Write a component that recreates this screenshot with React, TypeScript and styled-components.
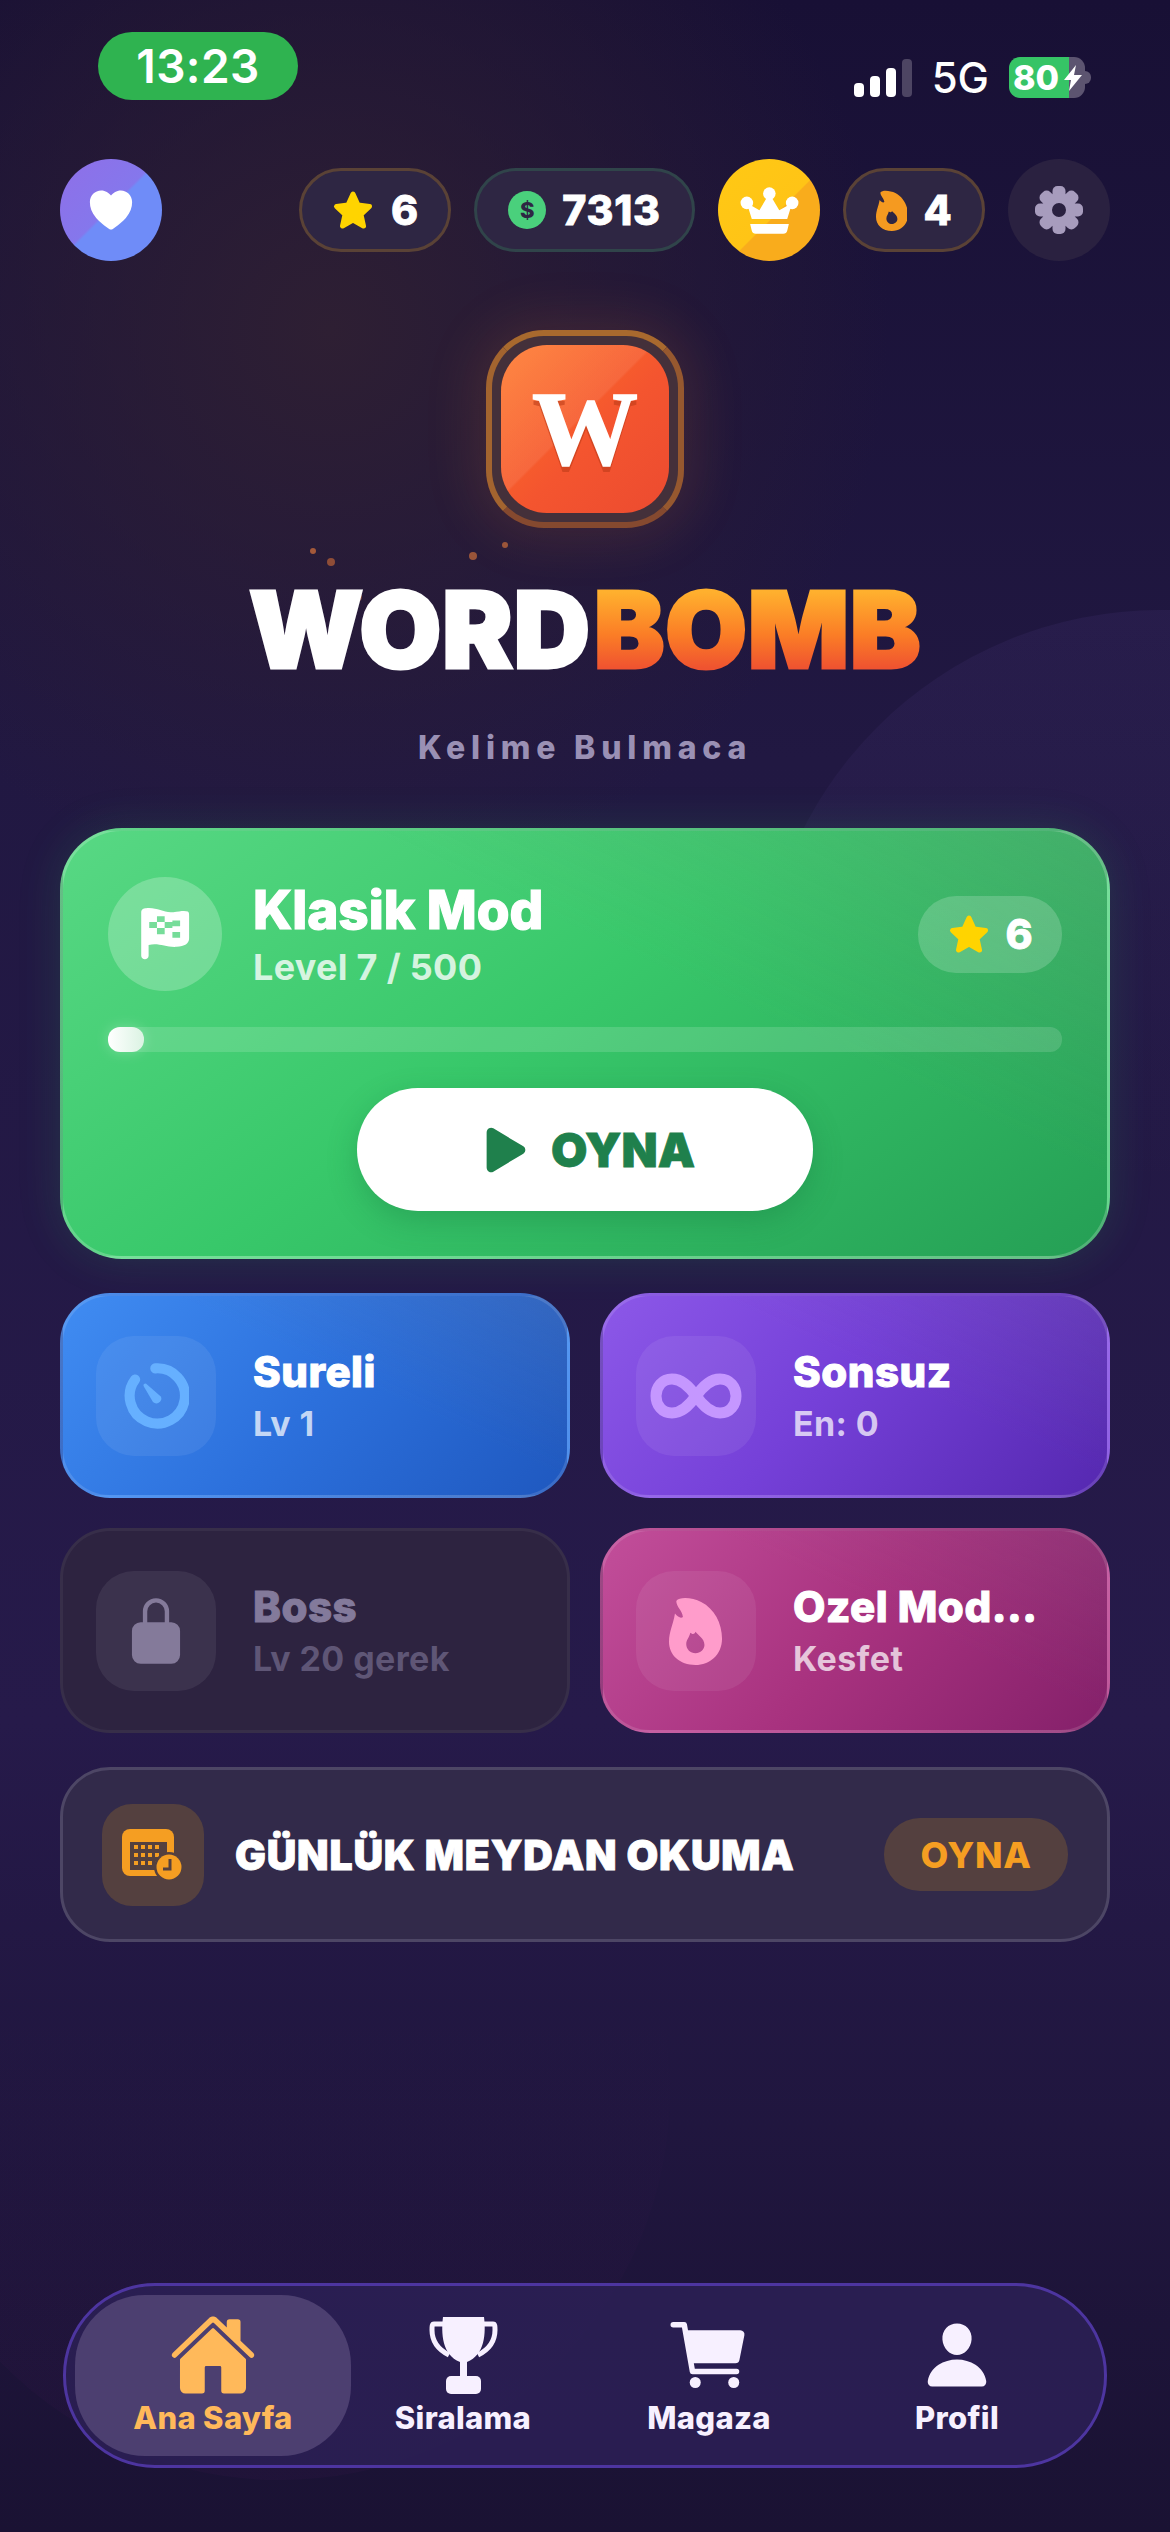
import * as React from 'react';
import styled, { createGlobalStyle } from 'styled-components';
import { IoHeart, IoHome, IoLockClosed, IoPerson, IoPlay, IoCart } from 'react-icons/io5';

const Global = createGlobalStyle`
  html, body { margin: 0; padding: 0; background: #1a1234; }
  * { box-sizing: border-box; }
  body { font-family: Inter, "Noto Sans", sans-serif; color: #fff; }
`;

const Page = styled.div`
  position: relative;
  width: 1170px;
  height: 2532px;
  overflow: hidden;
  display: flex;
  flex-direction: column;
  background:
    radial-gradient(circle 560px at 330px 330px, #2e1f33 0%, rgba(46, 31, 51, 0) 100%),
    linear-gradient(180deg, #181035 0%, #211842 30%, #261a4a 68%, #1a1233 100%);
`;

const Blob = styled.div<{ $x: number; $y: number; $r: number; $c: string }>`
  position: absolute;
  left: ${(p) => p.$x - p.$r}px;
  top: ${(p) => p.$y - p.$r}px;
  width: ${(p) => p.$r * 2}px;
  height: ${(p) => p.$r * 2}px;
  border-radius: 50%;
  background: ${(p) => p.$c};
`;

const Spark = styled.div<{ $x: number; $y: number; $r: number; $c: string }>`
  position: absolute;
  left: ${(p) => p.$x - p.$r}px;
  top: ${(p) => p.$y - p.$r}px;
  width: ${(p) => p.$r * 2}px;
  height: ${(p) => p.$r * 2}px;
  border-radius: 50%;
  background: ${(p) => p.$c};
`;

const StatusBar = styled.div`
  position: relative;
  height: 159px;
  padding: 32px 85px 0 98px;
  display: flex;
  justify-content: space-between;
  align-items: flex-start;
`;

const TimePill = styled.div`
  width: 200px;
  height: 68px;
  border-radius: 34px;
  background: #2fb350;
  display: flex;
  align-items: center;
  justify-content: center;
  font-size: 46px;
  font-weight: 600;
  letter-spacing: 0.4px;
`;

const StatusRight = styled.div`
  margin-top: 25px;
  height: 41px;
  display: flex;
  align-items: center;
  gap: 20px;
`;

const Bars = styled.div`
  display: flex;
  align-items: flex-end;
  gap: 6px;
  height: 39px;
`;

const Bar = styled.div<{ $h: number; $off?: boolean }>`
  width: 10px;
  height: ${(p) => p.$h}px;
  border-radius: 4px;
  background: ${(p) => (p.$off ? '#4d4563' : '#fff')};
`;

const NetText = styled.div`
  font-size: 42px;
  font-weight: 500;
  line-height: 41px;
`;

const Battery = styled.div`
  position: relative;
  width: 76px;
  height: 41px;
  border-radius: 11px;
  overflow: visible;
  background: linear-gradient(90deg, #36c466 0 79%, #5c5470 79% 100%);
  display: flex;
  align-items: center;
  padding-left: 4px;
  font-size: 34px;
  font-weight: 800;
  &::after {
    content: '';
    position: absolute;
    right: -6px;
    top: 14px;
    width: 6px;
    height: 13px;
    border-radius: 0 6px 6px 0;
    background: #5c5470;
  }
`;

const BoltIcon = styled.svg`
  position: absolute;
  left: 55px;
  top: 8px;
  width: 18px;
  height: 26px;
`;

const TopRow = styled.div`
  position: relative;
  height: 102px;
  padding: 0 60px;
  display: flex;
  align-items: center;
  gap: 23px;
`;

const RoundBtn = styled.div<{ $bg: string }>`
  width: 102px;
  height: 102px;
  flex: none;
  border-radius: 50%;
  background: ${(p) => p.$bg};
  display: flex;
  align-items: center;
  justify-content: center;
`;

const Spacer = styled.div`
  flex: 1;
`;

const StatPill = styled.div<{ $border: string; $w: number }>`
  width: ${(p) => p.$w}px;
  height: 84px;
  flex: none;
  border-radius: 42px;
  background: #2e2643;
  border: 3px solid ${(p) => p.$border};
  display: flex;
  align-items: center;
  justify-content: center;
  gap: 16px;
  font-size: 41px;
  font-weight: 800;
  letter-spacing: 0.8px;
  -webkit-text-stroke: 0.8px #fff;
`;

const Coin = styled.div`
  width: 38px;
  height: 38px;
  border-radius: 50%;
  background: #4ad07c;
  color: #2e2643;
  font-size: 22px;
  font-weight: 800;
  letter-spacing: 0;
  -webkit-text-stroke: 0;
  display: flex;
  align-items: center;
  justify-content: center;
`;

const Hero = styled.div`
  position: relative;
  display: flex;
  flex-direction: column;
  align-items: center;
  padding-top: 69px;
`;

const LogoRing = styled.div`
  width: 198px;
  height: 198px;
  border-radius: 58px;
  border: 6px solid #a3642f;
  border-color: #a8692e #96582f #85492f #a3642f;
  background: #44303a;
  display: flex;
  align-items: center;
  justify-content: center;
  box-shadow: 0 0 50px 14px rgba(240, 120, 50, 0.12);
`;

const LogoTile = styled.div`
  width: 168px;
  height: 168px;
  border-radius: 46px;
  background:
    linear-gradient(135deg, rgba(255, 255, 255, 0.14) 0%, rgba(255, 255, 255, 0.08) 45%, rgba(255, 255, 255, 0) 46%),
    linear-gradient(135deg, #ff7424 0%, #f4552f 55%, #ec4b30 100%);
  display: flex;
  align-items: center;
  justify-content: center;
  font-family: "Liberation Serif", serif;
  font-weight: 700;
  font-size: 106px;
  line-height: 1;
  -webkit-text-stroke: 1.5px #fff;
  text-shadow: 0 6px 0 rgba(190, 60, 25, 0.6);
`;

const Wordmark = styled.h1`
  margin: 52px 0 0;
  font-size: 106px;
  line-height: 100px;
  font-weight: 900;
  letter-spacing: 0.6px;
  display: flex;
  -webkit-text-stroke: 3px #fff;
`;

const Bomb = styled.span`
  padding-left: 3px;
  background: linear-gradient(180deg, #ffb02e 12%, #fb7d26 55%, #ef5330 88%);
  -webkit-background-clip: text;
  background-clip: text;
  color: transparent;
  -webkit-text-stroke: 3px transparent;
`;

const Subtitle = styled.div`
  margin-top: 50px;
  font-size: 32px;
  line-height: 36px;
  font-weight: 800;
  letter-spacing: 5.8px;
  color: #9a90b4;
`;

const Content = styled.div`
  position: relative;
  padding: 62px 60px 0;
  display: flex;
  flex-direction: column;
`;

const MainCard = styled.div`
  height: 431px;
  border-radius: 62px;
  border: 3px solid rgba(255, 255, 255, 0.2);
  background:
    linear-gradient(205deg, rgba(130, 130, 130, 0.22) 0%, rgba(130, 130, 130, 0) 38%),
    linear-gradient(145deg, #58d884 0%, #38c86a 45%, #259f55 100%);
  box-shadow: 0 0 44px rgba(50, 200, 100, 0.16);
  padding: 46px 45px 0;
  display: flex;
  flex-direction: column;
`;

const MainTop = styled.div`
  display: flex;
  align-items: center;
  height: 114px;
`;

const FlagCircle = styled.div`
  width: 114px;
  height: 114px;
  border-radius: 50%;
  background: rgba(255, 255, 255, 0.23);
  display: flex;
  align-items: center;
  justify-content: center;
`;

const MainText = styled.div`
  margin-left: 31px;
  flex: 1;
`;

const MainTitle = styled.div`
  font-size: 53px;
  line-height: 60px;
  font-weight: 800;
  -webkit-text-stroke: 1.2px #fff;
`;

const MainSub = styled.div`
  margin-top: 6px;
  font-size: 36px;
  line-height: 42px;
  font-weight: 700;
  letter-spacing: 0.3px;
  color: rgba(255, 255, 255, 0.8);
`;

const StarBadge = styled.div`
  width: 144px;
  height: 77px;
  border-radius: 38px;
  background: rgba(255, 255, 255, 0.18);
  display: flex;
  align-items: center;
  justify-content: center;
  gap: 14px;
  font-size: 41px;
  font-weight: 800;
  -webkit-text-stroke: 0.8px #fff;
`;

const Track = styled.div`
  margin-top: 36px;
  height: 25px;
  border-radius: 12px;
  background: rgba(255, 255, 255, 0.14);
`;

const Fill = styled.div`
  height: 100%;
  border-radius: 12px;
  background: linear-gradient(90deg, #fff, #dbf3e3);
  box-shadow: 0 0 14px rgba(255, 255, 255, 0.25);
`;

const PlayButton = styled.div`
  align-self: center;
  margin-top: 36px;
  width: 456px;
  height: 123px;
  border-radius: 61px;
  background: #fff;
  box-shadow: 0 10px 30px rgba(20, 110, 60, 0.3);
  display: flex;
  align-items: center;
  justify-content: center;
  gap: 14px;
  color: #1f804c;
  font-size: 47px;
  font-weight: 900;
  -webkit-text-stroke: 0.8px #1f804c;
`;

const ModeGrid = styled.div`
  margin-top: 34px;
  display: grid;
  grid-template-columns: 1fr 1fr;
  gap: 30px;
`;

const modeBg: Record<string, string> = {
  blue: `linear-gradient(205deg, rgba(110, 110, 130, 0.2) 0%, rgba(110, 110, 130, 0) 42%), linear-gradient(130deg, #408cf2 0%, #2c70dc 50%, #1f58bf 100%)`,
  purple: `linear-gradient(205deg, rgba(110, 110, 130, 0.16) 0%, rgba(110, 110, 130, 0) 42%), linear-gradient(130deg, #8c58e8 0%, #7540d8 45%, #5528b0 100%)`,
  pink: `linear-gradient(205deg, rgba(120, 110, 130, 0.16) 0%, rgba(120, 110, 130, 0) 42%), linear-gradient(130deg, #c24e9a 0%, #a8327f 50%, #84206a 100%)`,
  dark: `#2d2340`,
};

const ModeCard = styled.div<{ $kind: string }>`
  height: 205px;
  border-radius: 50px;
  border: 3px solid ${(p) => (p.$kind === 'dark' ? 'rgba(255,255,255,0.05)' : 'rgba(255,255,255,0.12)')};
  background: ${(p) => modeBg[p.$kind]};
  padding: 0 33px;
  display: flex;
  align-items: center;
  gap: 37px;
`;

const ModeIconBox = styled.div`
  width: 120px;
  height: 120px;
  flex: none;
  border-radius: 38px;
  background: rgba(255, 255, 255, 0.07);
  display: flex;
  align-items: center;
  justify-content: center;
`;

const ModeTitle = styled.div<{ $dim?: boolean }>`
  font-size: 42px;
  line-height: 50px;
  font-weight: 800;
  letter-spacing: 0.5px;
  color: ${(p) => (p.$dim ? '#837a9b' : '#fff')};
  -webkit-text-stroke: 1px ${(p) => (p.$dim ? '#837a9b' : '#fff')};
`;

const ModeSub = styled.div<{ $dim?: boolean }>`
  margin-top: 7px;
  font-size: 34px;
  line-height: 40px;
  font-weight: 700;
  letter-spacing: 0.4px;
  color: ${(p) => (p.$dim ? '#5f5676' : 'rgba(255,255,255,0.72)')};
`;

const DailyCard = styled.div`
  margin-top: 34px;
  height: 175px;
  border-radius: 50px;
  border: 3px solid #4d4665;
  background: #322a4a;
  padding: 0 39px 0 39px;
  display: flex;
  align-items: center;
`;

const DailyIcon = styled.div`
  width: 102px;
  height: 102px;
  border-radius: 30px;
  background: #54403f;
  display: flex;
  align-items: center;
  justify-content: center;
`;

const DailyTitle = styled.div`
  margin-left: 31px;
  flex: 1;
  font-size: 41px;
  font-weight: 900;
  letter-spacing: 0.8px;
  white-space: nowrap;
  -webkit-text-stroke: 0.8px #fff;
`;

const DailyButton = styled.div`
  width: 184px;
  height: 73px;
  border-radius: 36px;
  background: #54403f;
  color: #f59e22;
  font-size: 36px;
  font-weight: 800;
  letter-spacing: 0.6px;
  display: flex;
  align-items: center;
  justify-content: center;
`;

const Nav = styled.nav`
  position: absolute;
  left: 63px;
  top: 2283px;
  width: 1044px;
  height: 185px;
  border-radius: 92px;
  border: 3px solid #4d35a0;
  background: rgba(44, 32, 86, 0.85);
  padding: 9px;
  display: grid;
  grid-template-columns: 276px 224px 268px 228px;
`;

const NavItem = styled.div<{ $active?: boolean }>`
  height: 161px;
  border-radius: 70px;
  background: ${(p) => (p.$active ? '#4c3f70' : 'transparent')};
  color: ${(p) => (p.$active ? '#ffb95a' : '#f7f0ff')};
  display: flex;
  flex-direction: column;
  align-items: center;
  font-size: 31px;
  font-weight: 800;
  letter-spacing: 0.3px;
`;

const NavGlyph = styled.div`
  height: 88px;
  margin-top: 16px;
  display: flex;
  align-items: center;
  justify-content: center;
`;

const NavLabel = styled.div`
  margin-top: 0;
  line-height: 38px;
`;

const StarIcon = ({ size }: { size: number }) => (
  <svg width={size} height={size} viewBox="0 0 44 42">
    <path
      d="M22 5L27 16L38.5 17.5L30 25.5L32.5 37L22 31L11.5 37L14 25.5L5.5 17.5L17 16Z"
      fill="#ffd400"
      stroke="#ffd400"
      strokeWidth="5"
      strokeLinejoin="round"
    />
  </svg>
);

const FlameIcon = ({ size, color }: { size: number; color: string }) => (
  <svg width={size * 0.78} height={size} viewBox="118 110 160 205">
    <path
      fill={color}
      fillRule="evenodd"
      d="M140 122C150 108 190 112 215 125C255 145 278 190 278 235C278 285 240 315 198 315C150 315 118 285 118 245C118 215 130 195 136 160C145 172 155 175 160 170C158 150 140 140 140 122ZM198 215C205 225 225 235 225 255C225 268 213 280 198 280C183 280 170 268 170 252C170 238 180 232 182 218C188 222 194 225 198 215Z"
    />
  </svg>
);

const CrownIcon = () => (
  <svg width="59" height="47" viewBox="120 110 177 142">
    <g fill="#fff">
      <circle cx="208" cy="130" r="19" />
      <circle cx="140" cy="158" r="19" />
      <circle cx="277" cy="158" r="19" />
      <path d="M140 158L178 180L208 130L238 180L277 158L262 207H155Z" />
      <path d="M150 222H267L262 242Q260 251 250 251H167Q157 251 155 242Z" />
    </g>
  </svg>
);

const GearIcon = () => (
  <svg width="48" height="48" viewBox="0 0 48 48">
    <g fill="#a79cbd">
      {[0, 45, 90, 135, 180, 225, 270, 315].map((a) => (
        <rect key={a} x="17.5" y="0" width="13" height="14" rx="5" transform={`rotate(${a} 24 24)`} />
      ))}
    </g>
    <circle cx="24" cy="24" r="12" fill="none" stroke="#a79cbd" strokeWidth="10" />
  </svg>
);

const FlagIcon = () => (
  <svg width="50" height="54" viewBox="152 108 154 168">
    <path
      fill="#fff"
      fillRule="evenodd"
      d="M155 125C155 116 162 112 170 112C205 108 225 128 255 124C275 121 290 118 300 122C304 124 304 130 304 136L304 205C304 222 290 230 265 232C230 234 210 218 178 226L178 260C178 274 155 274 155 260ZM180 155V173H204V155ZM204 137V155H228V137ZM228 155V173H252V155ZM252 150V168H276V150ZM204 173V193H228V173ZM252 186V204H276V186Z"
    />
  </svg>
);

const TimerIcon = () => (
  <svg width="66" height="66" viewBox="100 103 196 196">
    <path d="M196 119A82 82 0 1 1 136 152" fill="none" stroke="#66b0ff" strokeWidth="30" strokeLinecap="round" />
    <path d="M168 164L213 203A15 15 0 0 1 189 219L161 171Q160 164 168 164Z" fill="#66b0ff" />
  </svg>
);

const InfinityIcon = () => (
  <svg width="92" height="46" viewBox="0 0 92 46">
    <path
      d="M46 23C38 12 31 6 22 6C12 6 6 14 6 23C6 32 12 40 22 40C31 40 38 34 46 23C54 12 61 6 70 6C80 6 86 14 86 23C86 32 80 40 70 40C61 40 54 34 46 23Z"
      fill="none"
      stroke="#c597ff"
      strokeWidth="11"
    />
  </svg>
);

const CalendarIcon = () => (
  <svg width="62" height="52" viewBox="0 0 62 52">
    <rect x="0" y="0" width="52" height="47" rx="8" fill="#f59e22" />
    <rect x="8" y="13" width="37" height="28" fill="#54403f" />
    <g fill="#f59e22">
      {[0, 1, 2].map((r) =>
        [0, 1, 2, 3].map((c) => <rect key={`${r}${c}`} x={12 + c * 7} y={16 + r * 8} width="4" height="4" />)
      )}
    </g>
    <circle cx="47" cy="38" r="15" fill="#54403f" />
    <circle cx="47" cy="38" r="12.5" fill="#f59e22" />
    <path d="M48 30V40H41" fill="none" stroke="#54403f" strokeWidth="3" />
  </svg>
);

const TrophyIcon = () => (
  <svg width="69" height="77" viewBox="0 0 69 77">
    <g fill="currentColor">
      <path d="M14 0H55C57 16 56 38 38 45V60H31V45C13 38 12 16 14 0Z" />
      <rect x="17" y="59" width="35" height="18" rx="5" />
    </g>
    <g fill="none" stroke="currentColor" strokeWidth="5">
      <path d="M14 7H5C3 7 3 9 3 13C3 26 10 33 20 38" />
      <path d="M55 7H64C66 7 66 9 66 13C66 26 59 33 49 38" />
    </g>
  </svg>
);

const App: React.FC = () => (
  <Page>
    <Global />
    <Blob $x={1160} $y={1010} $r={400} $c="linear-gradient(180deg, rgba(120, 90, 190, 0.09) 0%, rgba(120, 90, 190, 0) 72%)" />
    <Blob $x={280} $y={2090} $r={390} $c="linear-gradient(0deg, rgba(100, 30, 110, 0.07) 0%, rgba(100, 30, 110, 0) 60%)" />
    <Spark $x={313} $y={551} $r={3} $c="#a4593a" />
    <Spark $x={331} $y={562} $r={4} $c="#8f4d37" />
    <Spark $x={473} $y={556} $r={4} $c="#99553a" />
    <Spark $x={505} $y={545} $r={3} $c="#99553a" />
    <Spark $x={357} $y={597} $r={5} $c="#7a4238" />
    <StatusBar>
      <TimePill>13:23</TimePill>
      <StatusRight>
        <Bars>
          <Bar $h={14} />
          <Bar $h={21} />
          <Bar $h={29} />
          <Bar $h={38} $off />
        </Bars>
        <NetText>5G</NetText>
        <Battery>
          80
          <BoltIcon viewBox="0 0 18 26">
            <path d="M12 0L0 15H7L5 26L18 10H10Z" fill="#fff" />
          </BoltIcon>
        </Battery>
      </StatusRight>
    </StatusBar>
    <TopRow>
      <RoundBtn $bg="linear-gradient(135deg, #8f6fe8 0%, #8577ec 48%, #6f8cf8 50%, #6f8cf8 100%)">
        <IoHeart size={52} color="#fff" />
      </RoundBtn>
      <Spacer />
      <StatPill $border="#5a4236" $w={152}>
        <StarIcon size={44} />
        <span>6</span>
      </StatPill>
      <StatPill $border="#30444a" $w={221}>
        <Coin>$</Coin>
        <span>7313</span>
      </StatPill>
      <RoundBtn $bg="linear-gradient(135deg, #ffc914 0%, #ffc416 55%, #f9ac1c 56%, #f9ac1c 100%)">
        <CrownIcon />
      </RoundBtn>
      <StatPill $border="#5a4236" $w={142}>
        <FlameIcon size={41} color="#f59a20" />
        <span>4</span>
      </StatPill>
      <RoundBtn $bg="#2a2140">
        <GearIcon />
      </RoundBtn>
    </TopRow>
    <Hero>
      <LogoRing>
        <LogoTile>W</LogoTile>
      </LogoRing>
      <Wordmark>
        WORD<Bomb>BOMB</Bomb>
      </Wordmark>
      <Subtitle>Kelime Bulmaca</Subtitle>
    </Hero>
    <Content>
      <MainCard>
        <MainTop>
          <FlagCircle>
            <FlagIcon />
          </FlagCircle>
          <MainText>
            <MainTitle>Klasik Mod</MainTitle>
            <MainSub>Level 7 / 500</MainSub>
          </MainText>
          <StarBadge>
            <StarIcon size={44} />
            <span>6</span>
          </StarBadge>
        </MainTop>
        <Track>
          <Fill style={{ width: `${(36 / 954) * 100}%` }} />
        </Track>
        <PlayButton>
          <IoPlay size={62} />
          <span>OYNA</span>
        </PlayButton>
      </MainCard>
      <ModeGrid>
        <ModeCard $kind="blue">
          <ModeIconBox>
            <TimerIcon />
          </ModeIconBox>
          <div>
            <ModeTitle>Sureli</ModeTitle>
            <ModeSub>Lv 1</ModeSub>
          </div>
        </ModeCard>
        <ModeCard $kind="purple">
          <ModeIconBox>
            <InfinityIcon />
          </ModeIconBox>
          <div>
            <ModeTitle>Sonsuz</ModeTitle>
            <ModeSub>En: 0</ModeSub>
          </div>
        </ModeCard>
        <ModeCard $kind="dark">
          <ModeIconBox>
            <IoLockClosed size={70} color="#847a9a" />
          </ModeIconBox>
          <div>
            <ModeTitle $dim>Boss</ModeTitle>
            <ModeSub $dim>Lv 20 gerek</ModeSub>
          </div>
        </ModeCard>
        <ModeCard $kind="pink">
          <ModeIconBox>
            <FlameIcon size={68} color="#ff9ccb" />
          </ModeIconBox>
          <div>
            <ModeTitle>Ozel Mod...</ModeTitle>
            <ModeSub>Kesfet</ModeSub>
          </div>
        </ModeCard>
      </ModeGrid>
      <DailyCard>
        <DailyIcon>
          <CalendarIcon />
        </DailyIcon>
        <DailyTitle>GÜNLÜK MEYDAN OKUMA</DailyTitle>
        <DailyButton>OYNA</DailyButton>
      </DailyCard>
    </Content>
    <Nav>
      <NavItem $active>
        <NavGlyph>
          <IoHome size={88} />
        </NavGlyph>
        <NavLabel>Ana Sayfa</NavLabel>
      </NavItem>
      <NavItem>
        <NavGlyph>
          <TrophyIcon />
        </NavGlyph>
        <NavLabel>Siralama</NavLabel>
      </NavItem>
      <NavItem>
        <NavGlyph>
          <IoCart size={88} />
        </NavGlyph>
        <NavLabel>Magaza</NavLabel>
      </NavItem>
      <NavItem>
        <NavGlyph>
          <IoPerson size={72} />
        </NavGlyph>
        <NavLabel>Profil</NavLabel>
      </NavItem>
    </Nav>
  </Page>
);

export default App;
